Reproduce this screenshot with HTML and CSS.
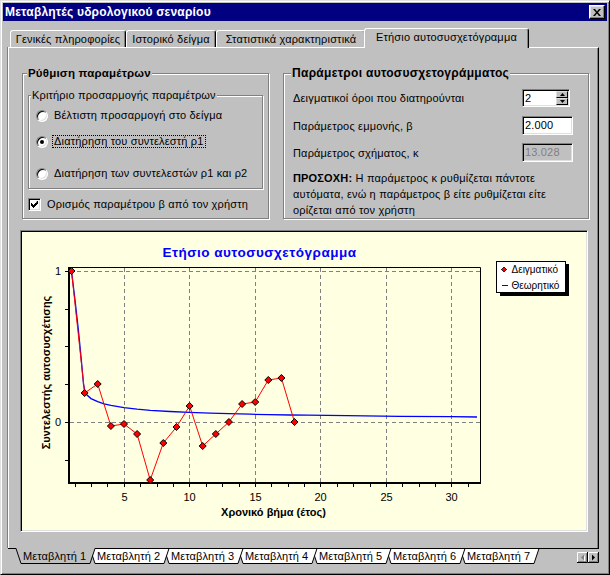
FILE: index.html
```html
<!DOCTYPE html>
<html lang="el">
<head>
<meta charset="utf-8">
<title>Μεταβλητές υδρολογικού σεναρίου</title>
<link rel="stylesheet" href="styles.css">
</head>
<body>
<div class="window">
  <div class="titlebar">
    <span class="title">Μεταβλητές υδρολογικού σεναρίου</span>
    <span class="close"><svg width="8" height="7" viewBox="0 0 8 7"><path d="M0 0h2l2 2.4 2-2.4h2l-3 3.5 3 3.5h-2l-2-2.4-2 2.4h-2l3-3.5z" fill="#000"/></svg></span>
  </div>

  <div class="tabs">
    <div class="tab t1">Γενικές πληροφορίες</div>
    <div class="tab t2">Ιστορικό δείγμα</div>
    <div class="tab t3">Στατιστικά χαρακτηριστικά</div>
    <div class="tab t4 active">Ετήσιο αυτοσυσχετόγραμμα</div>
  </div>

  <div class="panel">
    <div class="groups">
      <fieldset class="group g-left">
        <legend>Ρύθμιση παραμέτρων</legend>
        <fieldset class="group inner">
          <legend>Κριτήριο προσαρμογής παραμέτρων</legend>
          <div class="opt o1"><span class="radio"></span><span class="lbl">Βέλτιστη προσαρμογή στο δείγμα</span></div>
          <div class="opt o2"><span class="radio on"></span><span class="lbl focus">Διατήρηση του συντελεστή ρ1</span></div>
          <div class="opt o3"><span class="radio"></span><span class="lbl">Διατήρηση των συντελεστών ρ1 και ρ2</span></div>
        </fieldset>
        <div class="check-row">
          <span class="check"><svg width="7" height="7" viewBox="0 0 7 7"><path d="M6 0h1v3h-1v1h-1v1h-1v1h-1v1h-1v-1h-1v-1h-1v-3h1v1h1v1h1v-1h1v-1h1z" fill="#000"/></svg></span>
          <span class="lbl">Ορισμός παραμέτρου β από τον χρήστη</span>
        </div>
      </fieldset>

      <fieldset class="group g-right">
        <legend>Παράμετροι αυτοσυσχετογράμματος</legend>
        <div class="row r1">
          <span class="name">Δειγματικοί όροι που διατηρούνται</span>
          <div class="spin">
            <span class="spin-val">2</span>
            <span class="spin-btns">
              <span class="sb"><svg width="5" height="3" viewBox="0 0 5 3"><path d="M2.5 0L5 3H0z" fill="#000"/></svg></span>
              <span class="sb"><svg width="5" height="3" viewBox="0 0 5 3"><path d="M0 0H5L2.5 3z" fill="#000"/></svg></span>
            </span>
          </div>
        </div>
        <div class="row r2">
          <span class="name">Παράμετρος εμμονής, β</span>
          <div class="edit">2.000</div>
        </div>
        <div class="row r3">
          <span class="name">Παράμετρος σχήματος, κ</span>
          <div class="edit disabled">13.028</div>
        </div>
        <p class="note"><b>ΠΡΟΣΟΧΗ:</b> Η παράμετρος κ ρυθμίζεται πάντοτε<br>αυτόματα, ενώ η παράμετρος β είτε ρυθμίζεται είτε<br>ορίζεται από τον χρήστη</p>
      </fieldset>
    </div>

    <div class="chart">
      <svg width="564" height="298" viewBox="22 232 564 298" class="plot">
        <defs>
          <path id="dm" d="M0 -3.5L3.5 0L0 3.5L-3.5 0Z" fill="#ff0000" stroke="#000" stroke-width="1"/>
          <path id="dms" d="M0 -2.5L2.5 0L0 2.5L-2.5 0Z" fill="#ff0000" stroke="#000" stroke-width="0.8"/>
        </defs>
        <text class="ctitle" x="259.5" y="257" text-anchor="middle">Ετήσιο αυτοσυσχετόγραμμα</text>

        <g class="grid">
          <path d="M124.5 268V482M189.5 268V482M255.5 268V482M320.5 268V482M386.5 268V482M451.5 268V482"/>
          <path d="M70 271.5H480M70 422.5H480"/>
        </g>

        <path d="M68 267.5H480.5V482" stroke="#000" fill="none"/>
        <rect x="68" y="267" width="2" height="217" fill="#000"/>
        <rect x="68" y="482" width="413" height="2" fill="#000"/>
        <path class="ticks" d="M75.5 484v3M91.5 484v3M107.5 484v3M124.5 484v3M140.5 484v3M157.5 484v3M173.5 484v3M189.5 484v3M206.5 484v3M222.5 484v3M239.5 484v3M255.5 484v3M271.5 484v3M288.5 484v3M304.5 484v3M320.5 484v3M337.5 484v3M353.5 484v3M370.5 484v3M386.5 484v3M402.5 484v3M419.5 484v3M435.5 484v3M451.5 484v3M468.5 484v3M65 271.5h3M65 309.5h3M65 346.5h3M65 384.5h3M65 422.5h3M65 460.5h3"/>

        <g class="tlbl">
          <text x="61" y="275" text-anchor="end">1</text>
          <text x="61" y="426" text-anchor="end">0</text>
          <text x="124.5" y="501" text-anchor="middle">5</text>
          <text x="189.5" y="501" text-anchor="middle">10</text>
          <text x="255.5" y="501" text-anchor="middle">15</text>
          <text x="320.5" y="501" text-anchor="middle">20</text>
          <text x="386.5" y="501" text-anchor="middle">25</text>
          <text x="451.5" y="501" text-anchor="middle">30</text>
        </g>
        <text class="atitle" x="273.5" y="516" text-anchor="middle">Χρονικό βήμα (έτος)</text>
        <text class="atitle" transform="translate(49.5 372.5) rotate(-90)" text-anchor="middle">Συντελεστής αυτοσυσχέτισης</text>

        <polyline class="theo" points="71.5,271 75,300 78.5,331 81.5,362 83.5,384 85,392 87,395 91,398.6 97.7,401.7 104,403.8 110.9,405.4 124,407.7 137,409.2 150.2,410.3 170,411.5 189.6,412.4 210,413.1 228.9,413.7 250,414.2 268.3,414.6 290,415 307.7,415.2 347,415.7 399.5,416.3 452,416.7 477,417"/>
        <polyline class="samp" points="71.5,271 84.6,393 97.7,384 110.9,426 124,424 137.1,434 150.2,480 163.3,443 176.5,427 189.6,406 202.7,446 215.8,434 228.9,422 242.1,404 255.2,402 268.3,380 281.4,378 294.5,422"/>
        <g>
          <use href="#dm" x="71.5" y="271"/>
          <use href="#dm" x="84.6" y="393"/>
          <use href="#dm" x="97.7" y="384"/>
          <use href="#dm" x="110.9" y="426"/>
          <use href="#dm" x="124" y="424"/>
          <use href="#dm" x="137.1" y="434"/>
          <use href="#dm" x="150.2" y="480"/>
          <use href="#dm" x="163.3" y="443"/>
          <use href="#dm" x="176.5" y="427"/>
          <use href="#dm" x="189.6" y="406"/>
          <use href="#dm" x="202.7" y="446"/>
          <use href="#dm" x="215.8" y="434"/>
          <use href="#dm" x="228.9" y="422"/>
          <use href="#dm" x="242.1" y="404"/>
          <use href="#dm" x="255.2" y="402"/>
          <use href="#dm" x="268.3" y="380"/>
          <use href="#dm" x="281.4" y="378"/>
          <use href="#dm" x="294.5" y="422"/>
        </g>

        <g class="legend">
          <rect x="500" y="264" width="69" height="32" fill="#000"/>
          <rect x="496.5" y="261.5" width="69" height="31" fill="#fff" stroke="#000"/>
          <path d="M501 269.5h6" stroke="#ff0000"/>
          <use href="#dms" x="504" y="269.5"/>
          <path d="M502 285.5h6" stroke="#0000ff"/>
          <text x="511.5" y="273">Δειγματικό</text>
          <text x="511.5" y="289">Θεωρητικό</text>
        </g>
      </svg>
    </div>
  </div>

  <svg class="sheets" width="592" height="18" viewBox="8 548 592 18">
    <path d="M8 548.5H599" stroke="#000"/>
    <g class="stab">
      <polygon points="460,548.5 465,563.5 534,563.5 539,548.5"/>
      <polygon points="386,548.5 391,563.5 460,563.5 465,548.5"/>
      <polygon points="312,548.5 317,563.5 386,563.5 391,548.5"/>
      <polygon points="238,548.5 243,563.5 312,563.5 317,548.5"/>
      <polygon points="164,548.5 169,563.5 238,563.5 243,548.5"/>
      <polygon points="90,548.5 95,563.5 164,563.5 169,548.5"/>
    </g>
    <polygon points="16,548 21,563.5 90,563.5 95,548" fill="#c0c0c0"/>
    <polyline points="16,548.5 21,563.5 90,563.5 95,548.5" fill="none" stroke="#000"/>
    <g class="stext">
      <text x="23" y="560">Μεταβλητή 1</text>
      <text x="97" y="560">Μεταβλητή 2</text>
      <text x="171" y="560">Μεταβλητή 3</text>
      <text x="245" y="560">Μεταβλητή 4</text>
      <text x="319" y="560">Μεταβλητή 5</text>
      <text x="393" y="560">Μεταβλητή 6</text>
      <text x="467" y="560">Μεταβλητή 7</text>
    </g>
    <g class="sbtn">
      <rect x="577" y="552" width="11" height="11" fill="#c0c0c0"/>
      <path d="M577.5 562V552.5H587" stroke="#fff" fill="none"/>
      <path d="M577 562.5H587.5V552" stroke="#000" fill="none"/>
      <path d="M578 561.5H586.5V553" stroke="#808080" fill="none"/>
      <polygon points="582,558.5 585,555.5 585,561.5" fill="#fff"/>
      <polygon points="581,557.5 584,554.5 584,560.5" fill="#808080"/>
      <rect x="588" y="552" width="11" height="11" fill="#c0c0c0"/>
      <path d="M588.5 562V552.5H598" stroke="#fff" fill="none"/>
      <path d="M588 562.5H598.5V552" stroke="#000" fill="none"/>
      <path d="M589 561.5H597.5V553" stroke="#808080" fill="none"/>
      <polygon points="592,554.5 595,557.5 592,560.5" fill="#000"/>
    </g>
  </svg>
</div>
</body>
</html>
```

FILE: styles.css
```css
* { box-sizing: border-box; }
html, body { margin: 0; padding: 0; }
body {
  width: 610px;
  height: 575px;
  overflow: hidden;
  background: #c0c0c0;
  font-family: "Liberation Sans", Arial, sans-serif;
  font-size: 11px;
  letter-spacing: 0.17px;
  color: #000;
}

.window {
  width: 610px;
  height: 575px;
  background: #c0c0c0;
  border: 1px solid;
  border-color: #dfdfdf #000 #000 #dfdfdf;
  box-shadow: inset 1px 1px #fff, inset -1px -1px #808080;
  padding: 2px;
  display: flex;
  flex-direction: column;
}

/* title bar */
.titlebar {
  height: 18px;
  flex: none;
  background: #000080;
  color: #fff;
  display: flex;
  align-items: center;
  justify-content: space-between;
  padding-left: 2px;
}
.title { font-weight: bold; font-size: 12px; letter-spacing: 0.2px; line-height: 18px; white-space: nowrap; }
.close {
  width: 16px;
  height: 14px;
  margin-right: 2px;
  background: #c0c0c0;
  border: 1px solid;
  border-color: #fff #000 #000 #fff;
  box-shadow: inset -1px -1px #808080, inset 1px 1px #dfdfdf;
  display: flex;
  align-items: center;
  justify-content: center;
}
.close svg { display: block; }

/* top tabs */
.tabs {
  display: flex;
  align-items: flex-end;
  height: 19px;
  flex: none;
  margin: 7px 0 0 7px;
  position: relative;
  z-index: 1;
}
.tab {
  height: 17px;
  border: 1px solid;
  border-bottom: 0;
  border-color: #fff #000 transparent #fff;
  border-radius: 3px 3px 0 0;
  box-shadow: inset -1px 0 #808080;
  background: #c0c0c0;
  text-align: center;
  line-height: 16px;
  white-space: nowrap;
}
.t1 { width: 116px; }
.t2 { width: 90px; }
.t3 { width: 150px; }
.t4 { width: 165px; }
.tab.active {
  height: 20px;
  margin: 0 -2px -1px;
  line-height: 17px;
}

/* page */
.panel {
  flex: none;
  width: 591px;
  height: 501px;
  margin-left: 5px;
  border-top: 1px solid #fff;
  border-left: 1px solid #fff;
  border-right: 1px solid #000;
  box-shadow: inset -1px 0 #808080, -1px 0 #808080;
  padding: 18px 0 0 11px;
}

.groups { display: flex; gap: 14px; padding-left: 2px; }

.group {
  margin: 0;
  padding: 0;
  min-width: 0;
  border: 1px solid #808080;
  box-shadow: 1px 1px 0 #fff, inset 1px 1px 0 #fff;
}
.group > legend {
  padding: 0 1px;
  line-height: 14px;
  font-size: 11px;
  background: #c0c0c0;
}
.g-left { width: 247px; height: 153px; }
.g-left > legend { margin-left: 4px; font-weight: bold; font-size: 11.5px; letter-spacing: 0.2px; }
.g-right { width: 306px; height: 153px; }
.g-right > legend { margin-left: 7px; font-weight: bold; font-size: 12px; letter-spacing: 0.3px; }

.inner { margin: 8px 5px 0; height: 101px; }
.inner > legend { margin-left: 2px; font-weight: normal; }

.opt { display: flex; align-items: center; height: 13px; padding-left: 7px; }
.o1 { margin-top: 7px; }
.o2 { margin-top: 13px; }
.o3 { margin-top: 19px; }

.radio {
  position: relative;
  width: 12px;
  height: 12px;
  flex: none;
  border-radius: 50%;
  background: #fff;
  border: 1px solid;
  border-color: #808080 #fff #fff #808080;
  box-shadow: inset 1px 1px #000, inset -1px -1px #dfdfdf;
}
.radio.on::after {
  content: "";
  position: absolute;
  left: 3px;
  top: 3px;
  width: 4px;
  height: 4px;
  border-radius: 50%;
  background: #000;
}

.lbl {
  margin-left: 4px;
  padding: 0 1px;
  line-height: 11px;
  border: 1px solid transparent;
  white-space: nowrap;
}
.lbl.focus { border: 1px dotted #000; }

.check-row { display: flex; align-items: center; height: 13px; margin: 9px 0 0 5px; }
.check {
  width: 13px;
  height: 13px;
  flex: none;
  background: #fff;
  border: 1px solid;
  border-color: #808080 #fff #fff #808080;
  box-shadow: inset 1px 1px #000, inset -1px -1px #dfdfdf;
}
.check svg { display: block; margin: 2px 0 0 2px; }

.row { display: flex; align-items: center; padding-left: 9px; }
.row .name { width: 229px; flex: none; white-space: nowrap; }
.r1 { margin-top: 9px; height: 18px; }
.r2 { margin-top: 9px; height: 19px; }
.r3 { margin-top: 8px; height: 19px; }

.edit, .spin {
  background: #fff;
  border: 1px solid;
  border-color: #808080 #fff #fff #808080;
  box-shadow: inset 1px 1px #000, inset -1px -1px #dfdfdf;
}
.edit {
  width: 51px;
  height: 19px;
  padding: 0 2px;
  line-height: 17px;
}
.edit.disabled { color: #808080; background: #c0c0c0; }

.spin {
  width: 48px;
  height: 18px;
  padding: 1px;
  display: flex;
}
.spin-val { flex: 1; padding-left: 1px; line-height: 14px; }
.spin-btns { width: 12px; display: flex; flex-direction: column; }
.sb {
  height: 7px;
  background: #c0c0c0;
  border: 1px solid;
  border-color: #dfdfdf #000 #000 #dfdfdf;
  display: flex;
  align-items: center;
  justify-content: center;
}
.sb svg { display: block; }

.note { margin: 8px 0 0; padding-left: 9px; line-height: 16px; white-space: nowrap; }

/* chart */
.chart {
  margin-top: 11px;
  width: 568px;
  height: 302px;
  background: #ffffe1;
  border: 1px solid;
  border-color: #808080 #fff #fff #808080;
  box-shadow: inset 1px 1px #000, inset -1px -1px #dfdfdf;
}
.plot { display: block; margin: 1px; font-family: "Liberation Sans", Arial, sans-serif; letter-spacing: 0; }
.ctitle { font-size: 13.5px; font-weight: bold; fill: #0000ff; letter-spacing: 0.5px; }
.grid path { stroke: #808080; stroke-dasharray: 4 3; fill: none; }
.ticks { stroke: #000; fill: none; }
.tlbl text { font-size: 11px; fill: #000; }
.atitle { font-size: 11px; font-weight: bold; fill: #000; letter-spacing: 0; }
.theo { fill: none; stroke: #0000ff; stroke-width: 1.3; }
.samp { fill: none; stroke: #ff0000; stroke-width: 1; }
.legend text { font-size: 10px; fill: #000; letter-spacing: 0; }

/* sheet tabs */
.sheets { display: block; flex: none; margin-left: 5px; font-family: "Liberation Sans", Arial, sans-serif; letter-spacing: 0.1px; }
.stab polygon { fill: #fff; stroke: #000; }
.stext text { font-size: 11px; fill: #000; }
```
